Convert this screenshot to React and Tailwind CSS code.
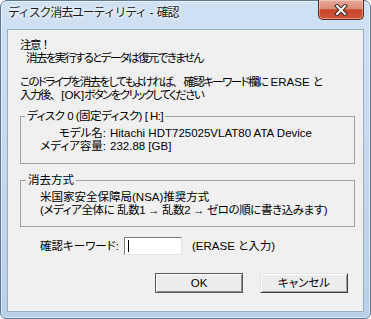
const font = "font-['Liberation_Sans','Noto_Sans_CJK_JP',sans-serif] [font-feature-settings:'palt']"

const CloseButton = () => (
  <div className="-mt-px mr-[6px] ml-auto flex h-[20px] w-[46px] items-center justify-center rounded-b-[5px] border border-t-0 border-[#5a2a22] bg-[linear-gradient(#eaa998_0%,#db8b76_45%,#c7452b_52%,#cf5637_100%)] shadow-[inset_0_0_0_1px_rgba(255,255,255,0.35)]">
    <svg width="14" height="12" viewBox="0 0 14 12">
      <path d="M3 2 L11 10 M11 2 L3 10" stroke="#3b2420" strokeWidth="4" strokeLinecap="square" />
      <path d="M3 2 L11 10 M11 2 L3 10" stroke="#ffffff" strokeWidth="2" strokeLinecap="square" />
    </svg>
  </div>
)

const Button = ({ children, isDefault }) => (
  <div
    className={
      isDefault
        ? "flex h-[20px] w-[88px] items-center justify-center border border-[#5a5a5a] bg-[#ececec] shadow-[inset_1px_1px_0_#fff,inset_-1px_-1px_0_#8a8a8a]"
        : "flex h-[20px] w-[88px] items-center justify-center border border-t-[#e3e3e3] border-l-[#e3e3e3] border-r-[#404040] border-b-[#404040] bg-[#ececec] shadow-[inset_1px_1px_0_#fff,inset_-1px_-1px_0_#a0a0a0]"
    }
  >
    {children}
  </div>
)

// full-width punctuation, kept at its normal width
const Wide = ({ children }) => <span className="tracking-normal [font-feature-settings:normal]">{children}</span>

export default function App() {
  return (
    <div className={`flex h-[319px] w-[371px] flex-col rounded-t-[7px] rounded-b-[6px] border border-[#5f7994] bg-linear-to-b from-[#d0e1f4] to-[#b9d0ea] text-black shadow-[inset_0_0_0_1px_rgba(255,255,255,0.5)] ${font}`}>
      {/* title bar */}
      <div className="flex h-[28px] items-start">
        <div className="pl-[7px] pt-[4px] text-[12px] leading-[16px] tracking-[-1.2px] text-[#1b1b1b] [font-feature-settings:normal] [text-shadow:0_0_6px_#fff,0_0_3px_#fff]">
          ディスク消去ユーティリティ<span className="tracking-normal"> - </span>確認
        </div>
        <CloseButton />
      </div>

      {/* client area */}
      <div className="mx-[6px] h-[283px] border border-[#98adc4] bg-[#f0f0f0] pl-[12px] pt-[9px] text-[11.5px] leading-[13px] whitespace-nowrap">
        <div className="tracking-[-1.6px]">
          <p>注意<Wide>！</Wide></p>
          <p className="pl-[6px]">消去を実行するとデータは復元できません</p>
          <p className="mt-[11px]">
            このドライブを消去をしてもよければ<Wide>、</Wide>確認キーワード欄に<span className="tracking-normal"> ERASE </span>と
          </p>
          <p>
            入力後<Wide>、</Wide><span className="tracking-normal">[OK]</span>ボタンをクリックしてください
          </p>
        </div>

        <fieldset className="mt-[8px] w-[335px] border border-[#a0a0a0] pb-[10px]">
          <legend className="ml-[4px] px-[2px] leading-[13px] tracking-[-0.5px]">ディスク 0 (固定ディスク) [ H:]</legend>
          <div className="grid grid-cols-[85px_1fr] pt-[4px]">
            <span className="text-right">モデル名:</span>
            <span className="pl-[4px]">Hitachi HDT725025VLAT80 ATA Device</span>
            <span className="text-right">メディア容量:</span>
            <span className="pl-[4px]">232.88 [GB]</span>
          </div>
        </fieldset>

        <fieldset className="mt-[10px] w-[335px] border border-[#a0a0a0] pb-[9px]">
          <legend className="ml-[5px] px-[2px] leading-[13px]">消去方式</legend>
          <div className="pl-[19px] pt-[4px]">
            <p>米国家安全保障局(NSA)推奨方式</p>
            <p className="tracking-[-0.4px]">(メディア全体に 乱数1 → 乱数2 → ゼロの順に書き込みます)</p>
          </div>
        </fieldset>

        <div className="mt-[10px] flex h-[18px] items-center pl-[20px]">
          <span className="w-[84px]">確認キーワード:</span>
          <div className="flex h-[18px] w-[58px] items-center border border-t-[#7a7a7a] border-l-[#7a7a7a] border-b-[#e3e3e3] border-r-[#e3e3e3] bg-white">
            <span className="ml-[3px] h-[12px] w-px bg-black" />
          </div>
          <span className="ml-[10px]">(ERASE と入力)</span>
        </div>

        <div className="mt-[18px] flex gap-[17px] pl-[135px]">
          <Button isDefault>OK</Button>
          <Button>キャンセル</Button>
        </div>
      </div>
    </div>
  )
}
